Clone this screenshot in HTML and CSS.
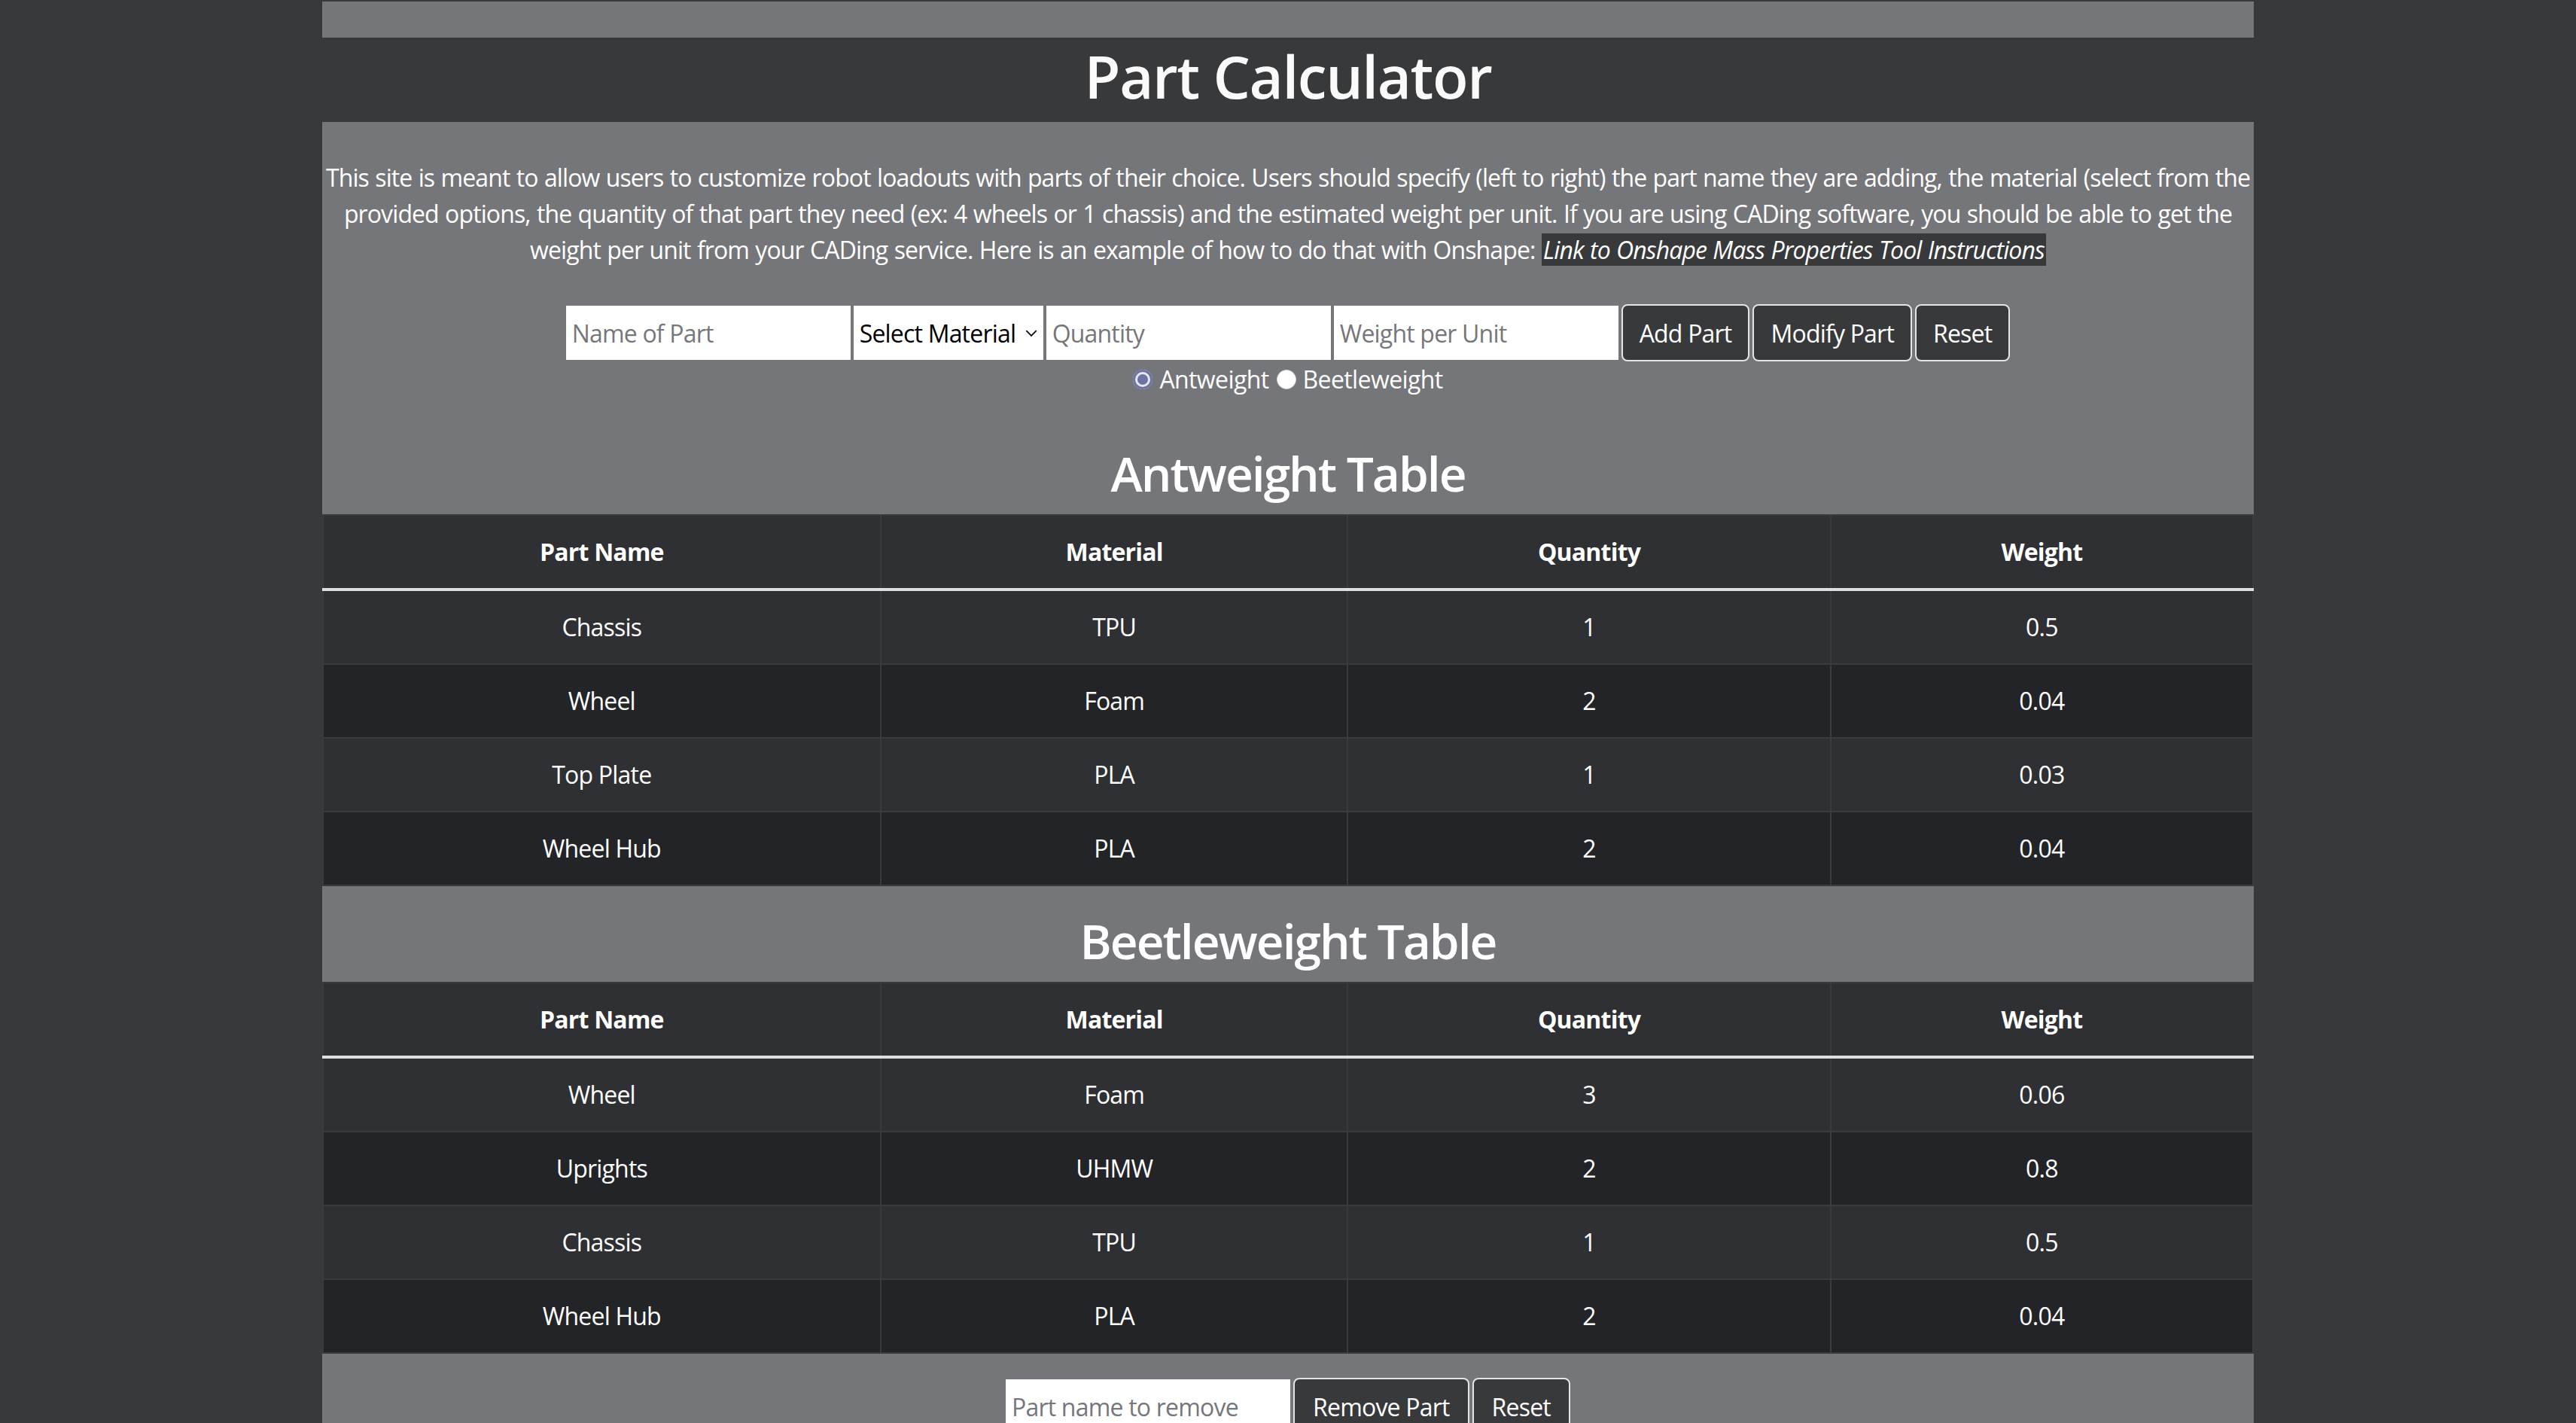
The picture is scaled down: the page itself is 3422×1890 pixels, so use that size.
FILE: index.html
```html
<!DOCTYPE html>
<html lang="en">
<head>
<meta charset="utf-8">
<title>Part Calculator</title>
<link rel="stylesheet" href="styles.css">
</head>
<body>
<div class="page">
  <div class="topbar"></div>
  <h1 class="title">Part Calculator</h1>
  <section class="panel">
    <p class="intro">This site is meant to allow users to customize robot loadouts with parts of their choice. Users should specify (left to right) the part name they are adding, the material (select from the provided options, the quantity of that part they need (ex: 4 wheels or 1 chassis) and the estimated weight per unit. If you are using CADing software, you should be able to get the weight per unit from your CADing service. Here is an example of how to do that with Onshape: <a class="link" href="#">Link to Onshape Mass Properties Tool Instructions</a></p>

    <div class="form-row">
      <input class="field" type="text" placeholder="Name of Part">
      <span class="select-wrap">
        <select class="field select">
          <option>Select Material</option>
          <option>TPU</option>
          <option>PLA</option>
          <option>Foam</option>
          <option>UHMW</option>
        </select>
        <svg class="chev" viewBox="0 0 12 8" width="16" height="11"><path d="M1 1.5 L6 6.5 L11 1.5" fill="none" stroke="#111" stroke-width="1.4"/></svg>
      </span>
      <input class="field" type="text" placeholder="Quantity">
      <input class="field" type="text" placeholder="Weight per Unit">
      <button class="btn" type="button">Add Part</button>
      <button class="btn" type="button">Modify Part</button>
      <button class="btn" type="button">Reset</button>
    </div>

    <div class="radio-row">
      <label class="radio-label"><span class="radio checked"></span>Antweight</label>
      <label class="radio-label"><span class="radio"></span>Beetleweight</label>
    </div>

    <h2 class="table-title first">Antweight Table</h2>
    <table class="parts">
      <thead>
        <tr><th class="c1">Part Name</th><th class="c2">Material</th><th class="c3">Quantity</th><th class="c4">Weight</th></tr>
      </thead>
      <tbody>
        <tr><td>Chassis</td><td>TPU</td><td>1</td><td>0.5</td></tr>
        <tr><td>Wheel</td><td>Foam</td><td>2</td><td>0.04</td></tr>
        <tr><td>Top Plate</td><td>PLA</td><td>1</td><td>0.03</td></tr>
        <tr><td>Wheel Hub</td><td>PLA</td><td>2</td><td>0.04</td></tr>
      </tbody>
    </table>

    <h2 class="table-title">Beetleweight Table</h2>
    <table class="parts">
      <thead>
        <tr><th class="c1">Part Name</th><th class="c2">Material</th><th class="c3">Quantity</th><th class="c4">Weight</th></tr>
      </thead>
      <tbody>
        <tr><td>Wheel</td><td>Foam</td><td>3</td><td>0.06</td></tr>
        <tr><td>Uprights</td><td>UHMW</td><td>2</td><td>0.8</td></tr>
        <tr><td>Chassis</td><td>TPU</td><td>1</td><td>0.5</td></tr>
        <tr><td>Wheel Hub</td><td>PLA</td><td>2</td><td>0.04</td></tr>
      </tbody>
    </table>

    <div class="form-row remove-row">
      <input class="field" type="text" placeholder="Part name to remove">
      <button class="btn" type="button">Remove Part</button>
      <button class="btn" type="button">Reset</button>
    </div>
  </section>
</div>
</body>
</html>
```
FILE: styles.css
```css
html, body {
  margin: 0;
  padding: 0;
}

body {
  background: #38393b;
  color: #ffffff;
  font-family: "Open Sans", "Noto Sans", "Liberation Sans", sans-serif;
  font-size: 32px;
  line-height: 48px;
}

.page {
  width: 75%;
  margin: 0 auto;
  padding-top: 2px;
}

.topbar {
  height: 48px;
  background: #75767a;
}

.title {
  margin: 0;
  padding: 3px 0 13px;
  font-size: 78px;
  line-height: 96px;
  font-weight: 600;
  text-align: center;
  color: #fafafa;
  letter-spacing: -1.4px;
}

.panel {
  background: #75767a;
  padding-top: 50px;
  padding-bottom: 60px;
}

.intro {
  margin: 0 0 48px;
  text-align: center;
  letter-spacing: -0.9px;
  word-spacing: 0.9px;
}

.link {
  color: #ffffff;
  font-style: italic;
  text-decoration: none;
  background: #38393b;
  padding: 0 2px;
}

.form-row {
  display: flex;
  justify-content: center;
  align-items: center;
  gap: 4px;
}

.field {
  box-sizing: border-box;
  height: 72px;
  width: 378px;
  border: none;
  margin: 0;
  padding: 0 8px;
  background: #ffffff;
  font-family: inherit;
  font-size: 32px;
  color: #111;
  letter-spacing: -0.8px;
  outline: none;
}

.field::placeholder {
  color: #76777b;
}

.select-wrap {
  position: relative;
  display: block;
}

.select {
  width: 252px;
  appearance: none;
  -webkit-appearance: none;
  padding: 0 30px 0 8px;
  color: #000;
  border-radius: 0;
}

.chev {
  position: absolute;
  right: 8px;
  top: 31px;
  pointer-events: none;
}

.btn {
  box-sizing: border-box;
  height: 76px;
  margin: 0;
  padding: 0 22px;
  background: #38393b;
  color: #ffffff;
  border: 2px solid #e4e4e4;
  border-radius: 8px;
  font-family: inherit;
  font-size: 32px;
  letter-spacing: -0.8px;
}

.radio-row {
  display: flex;
  justify-content: center;
  gap: 10px;
  margin-top: 0;
  letter-spacing: -0.6px;
}

.radio-label {
  display: flex;
  align-items: center;
}

.radio {
  box-sizing: border-box;
  width: 26px;
  height: 26px;
  border-radius: 50%;
  margin-right: 9px;
  background: #ffffff;
  border: 1px solid #d8d8d8;
}

.radio.checked {
  background: #6c74a6;
  border: none;
  box-shadow: inset 0 0 0 3px #6c74a6, inset 0 0 0 6px #e6e7f0;
}

.table-title {
  margin: 34px 0 16px;
  font-size: 64px;
  line-height: 77px;
  font-weight: 600;
  text-align: center;
  letter-spacing: -2px;
}

.table-title.first {
  margin-top: 62px;
}

.parts {
  width: 100%;
  border-collapse: collapse;
  text-align: center;
  background: #2f3033;
  letter-spacing: -0.8px;
}

.parts th,
.parts td {
  padding: 24px;
  border: 2px solid #3a3b3e;
  line-height: 48px;
}

.parts thead th {
  font-weight: 700;
  border-bottom: 4px solid #dedede;
}

.parts tbody tr:nth-child(even) {
  background: #232427;
}

.parts tbody tr:first-child td {
  border-top: 4px solid #dedede;
}

.c1 { width: 28.9%; }
.c2 { width: 24.2%; }
.c3 { width: 25%; }
.c4 { width: 21.9%; }

.remove-row {
  margin-top: 32px;
}

.remove-row .btn {
  padding: 0 24px;
}
```
